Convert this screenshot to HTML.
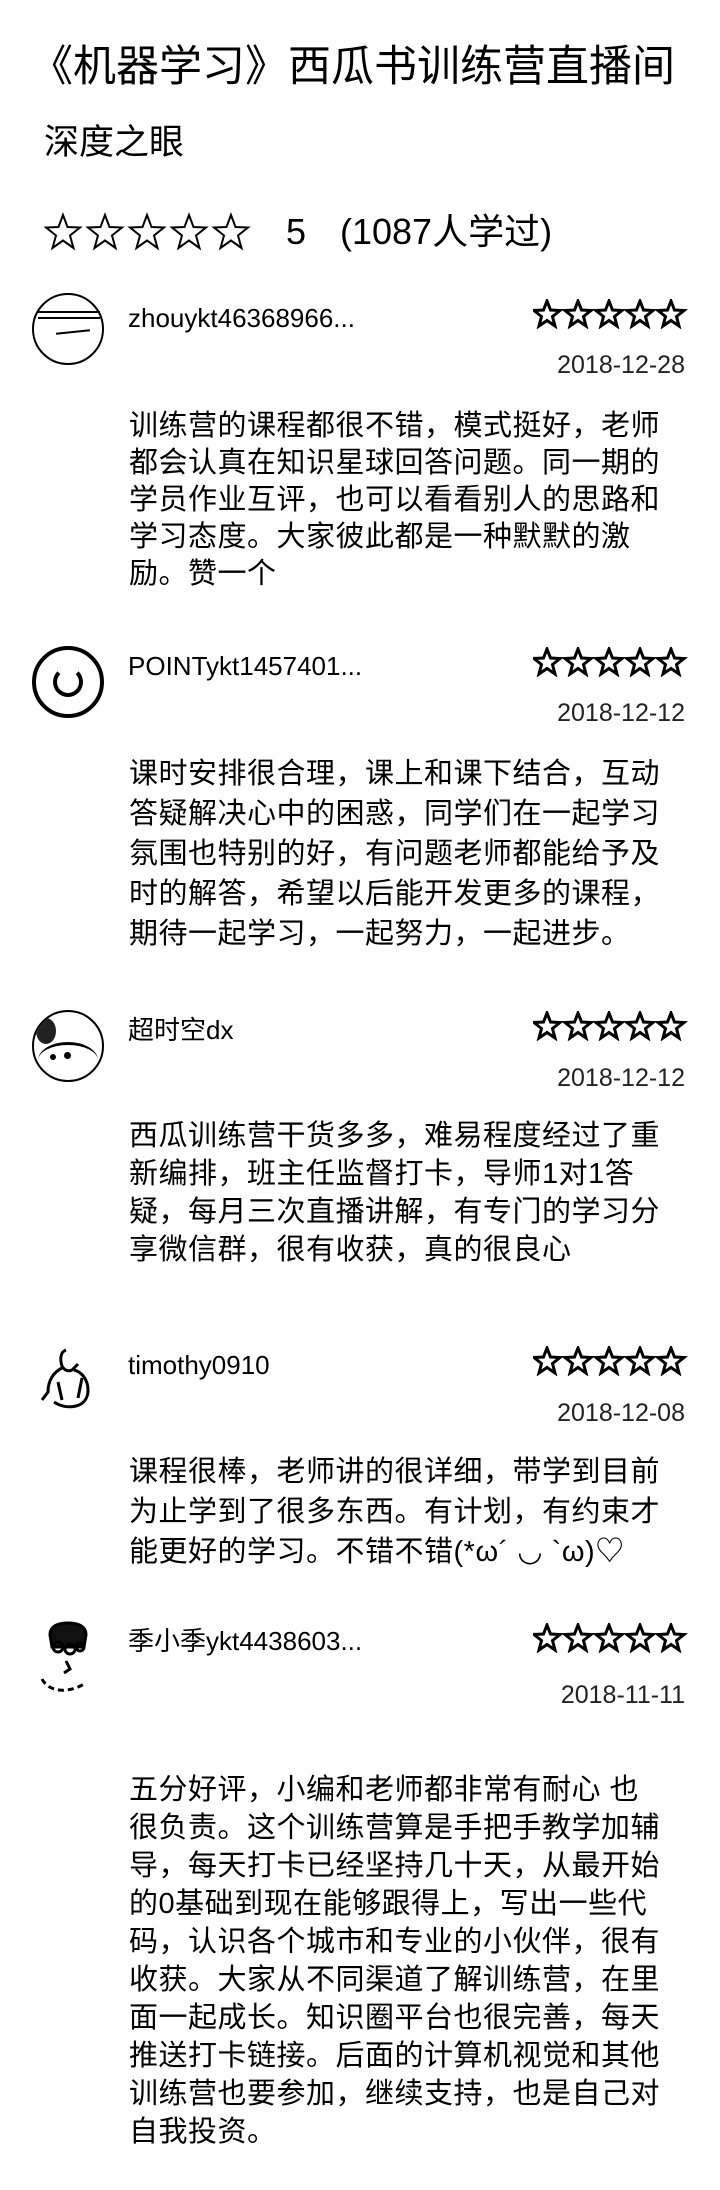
<!DOCTYPE html>
<html><head><meta charset="utf-8"><style>
body{margin:0;background:#fff;width:720px;height:2190px;position:relative;overflow:hidden;font-family:"Liberation Sans","Noto Sans CJK SC",sans-serif;color:#000}
.a{position:absolute;white-space:nowrap}
.title{left:30px;top:38px;font-size:43px;line-height:58px}
.sub{left:44px;top:121px;font-size:35px;line-height:44px}
.hdr{top:210px;font-size:36px;line-height:44px}
.un{left:128px;font-size:26px;line-height:34px}
.dt{right:35px;font-family:"Liberation Sans Narrow","Liberation Sans",sans-serif;font-size:25px;line-height:30px;color:#222}
.tx{left:129px;font-size:29px;line-height:38px;letter-spacing:0.5px}
.st{position:absolute;left:533px}
.av{position:absolute;left:32px;width:72px;height:72px;border-radius:50%}
</style></head><body>
<div class="a title">《机器学习》西瓜书训练营直播间</div>
<div class="a sub">深度之眼</div>
<svg class="a" style="left:44px;top:212px" width="215" height="42" viewBox="0 0 215 42">
<g fill="none" stroke="#000" stroke-width="2">
<polygon id="hs" points="19,3 23.5,15 36,15.5 26,23.5 29.5,36 19,28.5 8.5,36 12,23.5 2,15.5 14.5,15"/>
<use href="#hs" x="42"/><use href="#hs" x="84"/><use href="#hs" x="126"/><use href="#hs" x="168"/>
</g></svg>
<div class="a hdr" style="left:286px">5</div>
<div class="a hdr" style="left:340px">(1087人学过)</div>

<svg width="0" height="0" style="position:absolute"><defs>
<g id="s5" fill="none" stroke="#000" stroke-width="3" stroke-linejoin="miter">
<polygon points="14,2 17.5,11 27,11.5 19.5,17.5 22,27 14,21.5 6,27 8.5,17.5 1,11.5 10.5,11"/>
<polygon transform="translate(31 0)" points="14,2 17.5,11 27,11.5 19.5,17.5 22,27 14,21.5 6,27 8.5,17.5 1,11.5 10.5,11"/>
<polygon transform="translate(62 0)" points="14,2 17.5,11 27,11.5 19.5,17.5 22,27 14,21.5 6,27 8.5,17.5 1,11.5 10.5,11"/>
<polygon transform="translate(93 0)" points="14,2 17.5,11 27,11.5 19.5,17.5 22,27 14,21.5 6,27 8.5,17.5 1,11.5 10.5,11"/>
<polygon transform="translate(124 0)" points="14,2 17.5,11 27,11.5 19.5,17.5 22,27 14,21.5 6,27 8.5,17.5 1,11.5 10.5,11"/>
</g></defs></svg>

<!-- R1 -->
<div class="av" style="top:293px;border:2px solid #000;box-sizing:border-box"><div style="position:absolute;left:4px;right:2px;top:16px;border-top:2px solid #000;border-bottom:2px solid #000;height:4px"></div><div style="position:absolute;left:22px;width:34px;top:36px;border-top:2px solid #000;transform:rotate(-6deg)"></div></div>
<div class="a un" style="top:301px">zhouykt46368966...</div>
<svg class="st" style="top:299px" width="156" height="30"><use href="#s5"/></svg>
<div class="a dt" style="top:350px">2018-12-28</div>
<div class="a tx" style="top:408px;line-height:37px">训练营的课程都很不错，模式挺好，老师<br>都会认真在知识星球回答问题。同一期的<br>学员作业互评，也可以看看别人的思路和<br>学习态度。大家彼此都是一种默默的激<br>励。赞一个</div>

<!-- R2 -->
<div class="av" style="top:646px;border:4px solid #000;box-sizing:border-box"><div style="position:absolute;left:17px;top:17px;width:22px;height:22px;border:4px solid #000;border-radius:50%;border-top-color:transparent"></div></div>
<div class="a un" style="top:649px">POINTykt1457401...</div>
<svg class="st" style="top:647px" width="156" height="30"><use href="#s5"/></svg>
<div class="a dt" style="top:698px">2018-12-12</div>
<div class="a tx" style="top:754px;line-height:40px">课时安排很合理，课上和课下结合，互动<br>答疑解决心中的困惑，同学们在一起学习<br>氛围也特别的好，有问题老师都能给予及<br>时的解答，希望以后能开发更多的课程，<br>期待一起学习，一起努力，一起进步。</div>

<!-- R3 -->
<div class="av" style="top:1010px;border:2px solid #000;box-sizing:border-box;overflow:hidden"><div style="position:absolute;left:4px;top:30px;width:60px;height:34px;border-top:3px solid #000;border-radius:50% 50% 0 0"></div><div style="position:absolute;left:16px;top:42px;width:6px;height:6px;background:#000;border-radius:50%"></div><div style="position:absolute;left:30px;top:40px;width:7px;height:7px;background:#000;border-radius:50%"></div><div style="position:absolute;left:2px;top:6px;width:20px;height:26px;background:#222;border-radius:50%"></div></div>
<div class="a un" style="top:1013px">超时空dx</div>
<svg class="st" style="top:1011px" width="156" height="30"><use href="#s5"/></svg>
<div class="a dt" style="top:1063px">2018-12-12</div>
<div class="a tx" style="top:1117px">西瓜训练营干货多多，难易程度经过了重<br>新编排，班主任监督打卡，导师1对1答<br>疑，每月三次直播讲解，有专门的学习分<br>享微信群，很有收获，真的很良心</div>

<!-- R4 -->
<svg class="a" style="left:32px;top:1342px" width="72" height="72" viewBox="0 0 72 72" fill="none" stroke="#000" stroke-width="3"><path d="M34 8c-6 2-6 10-4 16 2 4 6 6 10 4l6-6"/><path d="M30 26c-8 4-14 12-14 24l-6 8"/><path d="M42 28c8 2 14 10 14 20 0 8-4 14-12 16-8 2-16 0-22-4"/><path d="M26 40l4 18"/><path d="M50 36l-4 20"/></svg>
<div class="a un" style="top:1348px">timothy0910</div>
<svg class="st" style="top:1346px" width="156" height="30"><use href="#s5"/></svg>
<div class="a dt" style="top:1398px">2018-12-08</div>
<div class="a tx" style="top:1452px;line-height:40px">课程很棒，老师讲的很详细，带学到目前<br>为止学到了很多东西。有计划，有约束才<br>能更好的学习。不错不错(*ω´ ◡ `ω)♡</div>

<!-- R5 -->
<svg class="a" style="left:32px;top:1619px" width="72" height="82" viewBox="0 0 72 82" fill="none" stroke="#000" stroke-width="3"><path d="M18 16c0-10 10-12 18-12s18 2 18 12l-2 12H20z" fill="#111"/><circle cx="26" cy="28" r="5"/><circle cx="38" cy="30" r="5"/><circle cx="48" cy="28" r="4"/><path d="M34 42l4 8-6 4"/><path d="M10 60c6 12 24 16 44 4" stroke-dasharray="6 4"/></svg>
<div class="a un" style="top:1624px">季小季ykt4438603...</div>
<svg class="st" style="top:1623px" width="156" height="30"><use href="#s5"/></svg>
<div class="a dt" style="top:1680px">2018-11-11</div>
<div class="a tx" style="top:1771px;line-height:38px">五分好评，小编和老师都非常有耐心 也<br>很负责。这个训练营算是手把手教学加辅<br>导，每天打卡已经坚持几十天，从最开始<br>的0基础到现在能够跟得上，写出一些代<br>码，认识各个城市和专业的小伙伴，很有<br>收获。大家从不同渠道了解训练营，在里<br>面一起成长。知识圈平台也很完善，每天<br>推送打卡链接。后面的计算机视觉和其他<br>训练营也要参加，继续支持，也是自己对<br>自我投资。</div>
</body></html>
